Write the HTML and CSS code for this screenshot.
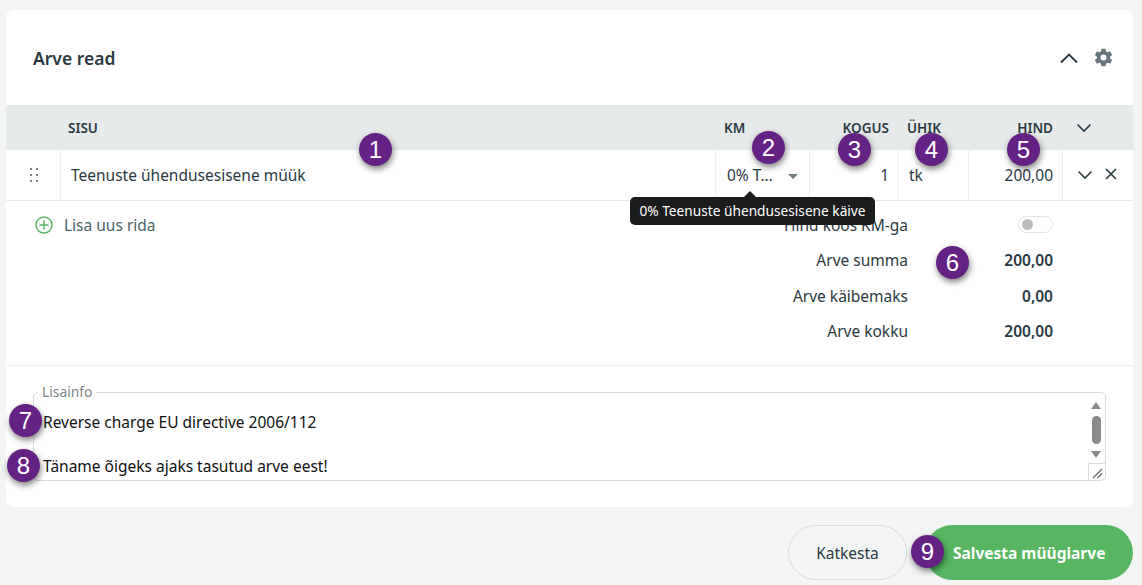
FILE: index.html
```html
<!DOCTYPE html>
<html lang="et">
<head>
<meta charset="utf-8">
<title>Arve read</title>
<link rel="stylesheet" href="styles.css">
</head>
<body>
<main class="page">
  <section class="card">
    <header class="card-head">
      <h2 class="card-title">Arve read</h2>
      <div class="card-tools">
        <svg class="icon-chev-up" width="20" height="12" viewBox="0 0 20 12"><path d="M2 10.500 10 2.500l8 8" fill="none" stroke="#2b3a42" stroke-width="1.900"/></svg>
        <svg class="icon-gear" width="21" height="21" viewBox="0 0 24 24"><path fill="#65757b" d="M19.400 13c.04-.33.06-.66.06-1s-.02-.67-.06-1l2.100-1.650c.2-.15.25-.42.12-.64l-2-3.460c-.12-.22-.39-.3-.61-.22l-2.490 1c-.52-.4-1.080-.73-1.690-.98l-.38-2.650A.49.49 0 0 0 14 2h-4c-.25 0-.46.18-.49.42l-.38 2.650c-.61.25-1.170.59-1.690.98l-2.490-1a.5.5 0 0 0-.61.22l-2 3.460c-.13.22-.07.49.12.64L4.560 11c-.04.33-.06.67-.06 1s.02.67.06 1l-2.100 1.650c-.2.15-.25.42-.12.64l2 3.460c.12.22.39.3.61.22l2.490-1c.52.4 1.080.73 1.690.98l.38 2.650c.03.24.24.42.49.42h4c.25 0 .46-.18.49-.42l.38-2.650c.61-.25 1.170-.59 1.690-.98l2.490 1c.23.09.49 0 .61-.22l2-3.460c.12-.22.07-.49-.12-.64L19.400 13zM12 15.500a3.500 3.500 0 1 1 0-7 3.500 3.500 0 0 1 0 7z"/></svg>
      </div>
    </header>

    <div class="grid table-head">
      <span></span>
      <span class="th th-sisu">SISU</span>
      <span class="th th-km">KM</span>
      <span class="th th-right">KOGUS</span>
      <span class="th th-unit">ÜHIK</span>
      <span class="th th-right">HIND</span>
      <span class="th-act"><svg width="16" height="10" viewBox="0 0 16 10"><path d="M1.500 1.500 8 8l6.500-6.500" fill="none" stroke="#2b3a42" stroke-width="1.600"/></svg></span>
    </div>

    <div class="grid table-row">
      <span class="td td-handle">
        <svg width="8" height="14" viewBox="0 0 8 14"><g fill="#76858a"><rect x="0" y="0" width="2" height="2"/><rect x="6" y="0" width="2" height="2"/><rect x="0" y="6" width="2" height="2"/><rect x="6" y="6" width="2" height="2"/><rect x="0" y="12" width="2" height="2"/><rect x="6" y="12" width="2" height="2"/></g></svg>
      </span>
      <span class="td td-text">Teenuste ühendusesisene müük</span>
      <span class="td td-km">0% T…<i class="caret"></i>
        <span class="tooltip">0% Teenuste ühendusesisene käive</span>
      </span>
      <span class="td td-num">1</span>
      <span class="td td-unit">tk</span>
      <span class="td td-num">200,00</span>
      <span class="td-actions">
        <svg width="16" height="10" viewBox="0 0 16 10"><path d="M1.500 1.500 8 8l6.500-6.500" fill="none" stroke="#2b3a42" stroke-width="1.600"/></svg>
        <svg class="icon-x" width="12" height="12" viewBox="0 0 12 12"><path d="M1 1l10 10M11 1 1 11" fill="none" stroke="#2b3a42" stroke-width="1.700"/></svg>
      </span>
    </div>

    <div class="summary">
      <div class="add-row">
        <svg width="18" height="18" viewBox="0 0 18 18"><circle cx="9" cy="9" r="8" fill="none" stroke="#58b663" stroke-width="1.400"/><path d="M9 4.500v9M4.500 9h9" stroke="#58b663" stroke-width="1.400"/></svg>
        <span>Lisa uus rida</span>
      </div>
      <dl class="totals">
        <div class="total-row"><dt>Hind koos KM-ga</dt><dd><span class="toggle"><i></i></span></dd></div>
        <div class="total-row"><dt>Arve summa</dt><dd>200,00</dd></div>
        <div class="total-row"><dt>Arve käibemaks</dt><dd>0,00</dd></div>
        <div class="total-row"><dt>Arve kokku</dt><dd>200,00</dd></div>
      </dl>
    </div>

    <div class="notes">
      <fieldset class="notes-box">
        <legend>Lisainfo</legend>
        <p>Reverse charge EU directive 2006/112</p>
        <p class="second">Täname õigeks ajaks tasutud arve eest!</p>
        <div class="scroll">
          <i class="arrow-up"></i>
          <i class="thumb"></i>
          <i class="arrow-down"></i>
          <span class="resize"><svg width="11" height="11" viewBox="0 0 11 11"><path d="M1 10 10 1M5.500 10 10 5.500" stroke="#666" stroke-width="1.200"/></svg></span>
        </div>
      </fieldset>
    </div>
  </section>

  <footer class="actions">
    <button class="btn btn-ghost" type="button">Katkesta</button>
    <button class="btn btn-save" type="button">Salvesta müügiarve</button>
  </footer>
</main>

<span class="badge b1">1</span>
<span class="badge b2">2</span>
<span class="badge b3">3</span>
<span class="badge b4">4</span>
<span class="badge b5">5</span>
<span class="badge b6">6</span>
<span class="badge b7">7</span>
<span class="badge b8">8</span>
<span class="badge b9">9</span>
</body>
</html>
```
FILE: styles.css
```css
* { box-sizing: border-box; }
html, body { margin: 0; height: 100%; }
body {
  background: #f3f5f4;
  font-family: "Noto Sans", "Liberation Sans", sans-serif;
  font-size: 15.500px;
  color: #2b3a42;
  overflow: hidden;
  position: relative;
}
.page { padding: 10px 9px 0 6px; }
.card {
  background: #fff;
  border-radius: 8px;
  height: 497px;
  display: flex;
  flex-direction: column;
}
.card-head {
  height: 95px;
  display: flex;
  align-items: center;
  justify-content: space-between;
  padding: 0 19px 0 27px;
}
.card-title { margin: 0; font-size: 17.500px; font-weight: 600; color: #2b3a42; }
.card-tools { display: flex; align-items: center; gap: 14px; }

.grid { display: grid; grid-template-columns: 54px 655px 94px 89px 70px 94px 71px; }
.table-head {
  height: 45px;
  background: #e7eaeb;
  align-items: center;
}
.th { font-size: 13.500px; font-weight: 600; color: #2b3a42; }
.th-sisu { padding-left: 8px; }
.th-km { padding-left: 9px; }
.th-right { text-align: right; padding-right: 9px; }
.th-unit { padding-left: 9px; }
.th-act { padding-left: 14px; display: flex; }

.table-row { height: 51px; border-bottom: 1px solid #e6e9e9; }
.td {
  display: flex;
  align-items: center;
  border-left: 1px solid #eceeee;
  padding: 0 9px 0 10px;
}
.td-handle { border-left: 0; justify-content: center; padding: 0 0 1px 2px; }
.td-km { position: relative; padding-left: 11px; }
.td-num { justify-content: flex-end; }
.caret {
  margin-left: 15px;
  margin-top: 2px;
  border: 5px solid transparent;
  border-top: 5px solid #6d7a7f;
  border-bottom: 0;
}
.td-actions {
  display: flex;
  align-items: center;
  gap: 12px;
  padding-left: 14px;
  border-left: 1px solid #eceeee;
}
.icon-x { margin-top: -2px; }
.tooltip {
  position: absolute;
  top: 47px;
  left: -86px;
  width: 245px;
  height: 28px;
  background: #1b1c1d;
  color: #fff;
  border-radius: 5px;
  font-size: 13.700px;
  line-height: 28px;
  text-align: center;
  white-space: nowrap;
  z-index: 2;
}
.tooltip::before {
  content: "";
  position: absolute;
  top: -6px;
  left: 114px;
  border: 6px solid transparent;
  border-top: 0;
  border-bottom-color: #1b1c1d;
}

.summary {
  height: 165px;
  border-bottom: 1px solid #eceeee;
  display: flex;
  justify-content: space-between;
  padding: 6px 80px 0 29px;
}
.add-row {
  display: flex;
  align-items: center;
  gap: 11px;
  height: 36px;
  color: #4b6468;
  align-self: flex-start;
}
.totals { margin: 0; width: 500px; }
.total-row {
  height: 35.500px;
  display: flex;
  justify-content: flex-end;
  align-items: center;
}
.total-row dt { text-align: right; }
.total-row dd { margin: 0; width: 145px; text-align: right; font-weight: 600; display: flex; justify-content: flex-end; }
.toggle {
  width: 35px;
  height: 17px;
  border: 1px solid #e0e3e3;
  border-radius: 9px;
  display: flex;
  align-items: center;
  padding-left: 3px;
}
.toggle i { width: 11px; height: 11px; border-radius: 50%; background: #bdbdbd; }

.notes { padding: 17px 27px 0 27px; }
.notes-box {
  position: relative;
  margin: 0;
  padding: 0 0 0 9px;
  height: 98px;
  border: 1px solid #d8dcdc;
  border-radius: 5px;
  color: #111;
}
.notes-box legend {
  font-size: 13.800px;
  color: #7b8588;
  padding: 0 4px;
  margin-left: -5px;
  line-height: 18px;
}
.notes-box p { margin: 9px 0 0 0; line-height: 24px; }
.notes-box p.second { margin-top: 20px; }
.scroll {
  position: absolute;
  right: 0;
  top: 0;
  bottom: 0;
  width: 18px;
  display: flex;
  flex-direction: column;
  align-items: center;
}
.arrow-up {
  margin-top: 1px;
  border: 5.500px solid transparent;
  border-top: 0;
  border-bottom: 7px solid #8a8a8a;
}
.thumb { width: 9px; height: 28px; margin-top: 7px; border-radius: 5px; background: #8a8a8a; }
.arrow-down {
  margin-top: 7px;
  border: 5.500px solid transparent;
  border-bottom: 0;
  border-top: 7px solid #8a8a8a;
}
.resize {
  position: absolute;
  right: 0;
  bottom: 0;
  width: 17px;
  height: 17px;
  border: 1px solid #d8dcdc;
  border-width: 1px 0 0 1px;
  display: flex;
  align-items: flex-end;
  justify-content: flex-end;
  padding: 0 2px 1px 0;
}

.actions { display: flex; justify-content: flex-end; gap: 18px; margin-top: 18px; }
.btn {
  height: 55px;
  border-radius: 28px;
  font-family: inherit;
  font-size: 15.500px;
}
.btn-ghost {
  width: 119px;
  background: transparent;
  border: 1px solid #d8dcdc;
  color: #2b3a42;
}
.btn-save {
  width: 208px;
  background: #58b663;
  border: 0;
  color: #fff;
  font-weight: 700;
  padding-left: 28px;
  padding-right: 0;
  text-align: left;
}

.badge {
  position: absolute;
  width: 33px;
  height: 33px;
  border-radius: 50%;
  background: #642284;
  color: #fff;
  font-family: "Liberation Sans", Arial, sans-serif;
  font-size: 24px;
  line-height: 33px;
  text-align: center;
  box-shadow: 1px 3px 6px rgba(0, 0, 0, .5);
  z-index: 3;
}
.b1 { left: 359px; top: 133px; }
.b2 { left: 752px; top: 131px; }
.b3 { left: 838px; top: 133px; }
.b4 { left: 915px; top: 133px; }
.b5 { left: 1007px; top: 133px; }
.b6 { left: 936px; top: 246px; }
.b7 { left: 9px; top: 404px; }
.b8 { left: 7px; top: 449px; }
.b9 { left: 911px; top: 535px; }
```
